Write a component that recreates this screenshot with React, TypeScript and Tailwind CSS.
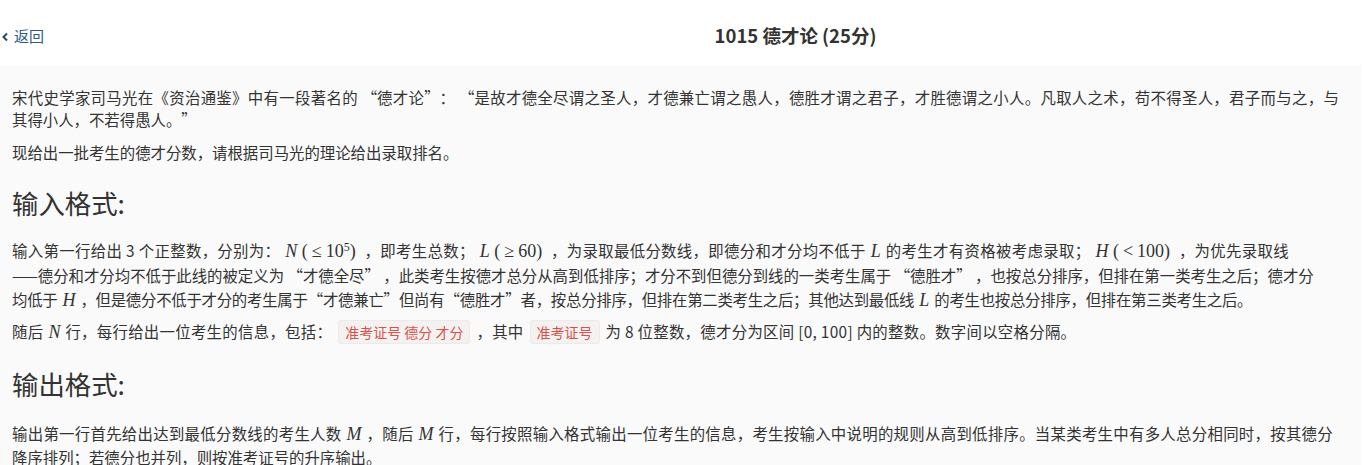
const CJK = '"Microsoft YaHei", "Noto Sans CJK SC", "Noto Sans", sans-serif'

// KaTeX-like math run
function M({ children }: { children: React.ReactNode }) {
  return (
    <span
      className="mx-[5px] text-[18px] leading-none tracking-normal text-[#333]"
      style={{ fontFamily: '"Liberation Serif", "DejaVu Serif", serif' }}
    >
      {children}
    </span>
  )
}

function V({ children }: { children: React.ReactNode }) {
  return <span style={{ fontStyle: 'italic' }}>{children}</span>
}

// relation symbol with KaTeX's thick spaces
function R({ c }: { c: string }) {
  return <span className="mx-[4px]">{c}</span>
}

// full-width curly quotes like YaHei draws them
function Q({ c }: { c: string }) {
  const open = c === '“'
  return (
    <span className={`inline-block w-[1em] ${open ? 'text-right' : 'text-left'}`}>{c}</span>
  )
}

function Code({ children }: { children: React.ReactNode }) {
  return (
    <code
      className="mx-[6px] rounded-[3px] border border-[#eeeaea] bg-[#f4f1f1] px-[6px] py-[1px] text-[14px] tracking-normal text-[#d6534c]"
      style={{ fontFamily: CJK }}
    >
      {children}
    </code>
  )
}

function L({ children, className = '' }: { children: React.ReactNode; className?: string }) {
  return <span className={`block whitespace-nowrap ${className}`}>{children}</span>
}

export default function App() {
  return (
    <div
      className="w-[1365px] h-[465px] overflow-hidden bg-white text-[#333] [text-spacing-trim:space-all]"
      style={{ fontFamily: CJK }}
    >
      <header className="flex h-[66px] items-center">
        <div className="w-[226px] shrink-0 pt-[7px]">
          <a className="flex items-center gap-[5px] text-[15px] text-[#2b5a86]">
            <svg width="8" height="10" viewBox="0 0 8 10" className="ml-[1px]">
              <path d="M6 1.5 L2.5 5 L6 8.5" fill="none" stroke="#2b4a6b" strokeWidth="2" />
            </svg>
            返回
          </a>
        </div>
        <h1 className="flex-1 pt-[5px] text-center text-[18.5px] font-bold text-[#333]">1015 德才论 (25分)</h1>
      </header>

      <main className="mr-[4px] h-full bg-[#fafafa] px-[12px] pt-[21px] text-[15.4px]">
        <p className="leading-[21.5px]">
          <L className="tracking-[0.33px]">
            宋代史学家司马光在《资治通鉴》中有一段著名的 <Q c="“" />德才论<Q c="”" />： <Q c="“" />是故才德全尽谓之圣人，才德兼亡谓之愚人，德胜才谓之君子，才胜德谓之小人。凡取人之术，苟不得圣人，君子而与之，与
          </L>
          <L>其得小人，不若得愚人。<Q c="”" /></L>
        </p>
        <p className="mt-[11.5px] leading-[21.5px]">现给出一批考生的德才分数，请根据司马光的理论给出录取排名。</p>

        <h2 className="mt-[19.75px] text-[26.4px] leading-[39px] font-normal">输入格式:</h2>

        <p className="mt-[16.25px] leading-[24.5px]">
          <L className="tracking-[0.35px]">
            输入第一行给出 3 个正整数，分别为：<M><V>N</V> (<R c="≤" />10<sup className="text-[12px]">5</sup>)</M> ，即考生总数；<M><V>L</V> (<R c="≥" />60)</M> ，为录取最低分数线，即德分和才分均不低于<M><V>L</V></M>的考生才有资格被考虑录取；<M><V>H</V> (<R c="<" />100)</M> ，为优先录取线
          </L>
          <L>
            ——德分和才分均不低于此线的被定义为 <Q c="“" />才德全尽<Q c="”" /> ，此类考生按德才总分从高到低排序；才分不到但德分到线的一类考生属于 <Q c="“" />德胜才<Q c="”" /> ，也按总分排序，但排在第一类考生之后；德才分
          </L>
          <L className="tracking-[-0.25px]">
            均低于<M><V>H</V></M>，但是德分不低于才分的考生属于<Q c="“" />才德兼亡<Q c="”" />但尚有<Q c="“" />德胜才<Q c="”" />者，按总分排序，但排在第二类考生之后；其他达到最低线<M><V>L</V></M>的考生也按总分排序，但排在第三类考生之后。
          </L>
        </p>
        <p className="mt-[7.75px] leading-[24px]">
          <L className="tracking-[0.3px]">
            随后<M><V>N</V></M>行，每行给出一位考生的信息，包括：<Code>准考证号 德分 才分</Code>，其中<Code>准考证号</Code>为 8 位整数，德才分为区间 [0, 100] 内的整数。数字间以空格分隔。
          </L>
        </p>

        <h2 className="mt-[19.5px] text-[26.4px] leading-[39px] font-normal">输出格式:</h2>

        <p className="mt-[18.5px] leading-[24px]">
          <L className="tracking-[0.3px]">
            输出第一行首先给出达到最低分数线的考生人数<M><V>M</V></M>，随后<M><V>M</V></M>行，每行按照输入格式输出一位考生的信息，考生按输入中说明的规则从高到低排序。当某类考生中有多人总分相同时，按其德分
          </L>
          <L>降序排列；若德分也并列，则按准考证号的升序输出。</L>
        </p>
      </main>
    </div>
  )
}
